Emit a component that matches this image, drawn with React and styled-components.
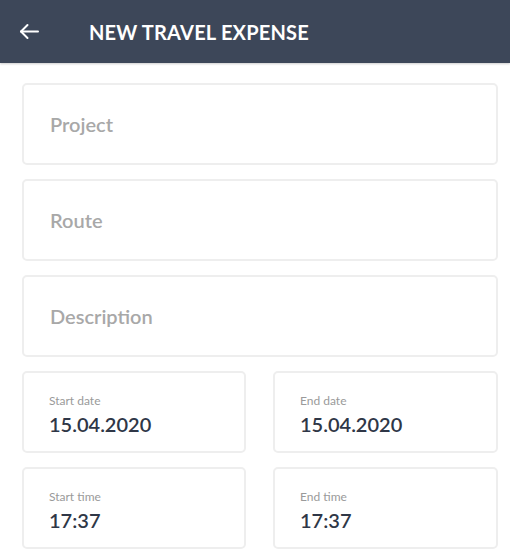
import React from 'react';
import styled, { createGlobalStyle } from 'styled-components';

const GlobalStyle = createGlobalStyle`
  body {
    margin: 0;
    background: #ffffff;
    font-family: Lato, "Open Sans", sans-serif;
  }
`;

const Page = styled.div`
  width: 510px;
  min-height: 556px;
  background: #ffffff;
`;

const Header = styled.header`
  height: 63px;
  display: flex;
  align-items: center;
  padding-left: 19px;
  gap: 49px;
  background: #3d4759;
  box-shadow: 0 1px 2px rgba(0, 0, 0, 0.2);
`;

const BackButton = styled.button`
  display: flex;
  align-items: center;
  padding: 0;
  border: none;
  background: none;
  cursor: pointer;
`;

const Title = styled.h1`
  margin: 0;
  font-size: 20px;
  font-weight: 700;
  color: #ffffff;
  letter-spacing: 0.2px;
`;

const Form = styled.div`
  display: flex;
  flex-direction: column;
  gap: 14px;
  padding: 20px 12px 0 22px;
`;

const Card = styled.div`
  box-sizing: border-box;
  height: 82px;
  border: 2px solid #eeeeee;
  border-radius: 5px;
  background: #ffffff;
  display: flex;
  flex-direction: column;
  justify-content: center;
  padding-left: ${p => (p.$compact ? '25px' : '26px')};
  padding-top: ${p => (p.$compact ? '5px' : '0')};
`;

const Placeholder = styled.span`
  font-size: 20px;
  font-weight: 600;
  color: #a8a8a8;
`;

const Row = styled.div`
  display: grid;
  grid-template-columns: 224px 225px;
  column-gap: 27px;
`;

const Label = styled.span`
  font-size: 12px;
  color: #9a9a9a;
  line-height: 15px;
`;

const Value = styled.span`
  margin-top: 3px;
  font-size: 20px;
  font-weight: 600;
  color: #2f3747;
  line-height: 26px;
`;

const ArrowLeft = () => (
  <svg width="21" height="17" viewBox="0 0 21 17" fill="none" stroke="#ffffff" strokeWidth="2" strokeLinecap="round" strokeLinejoin="round">
    <path d="M19 8.5H2" />
    <path d="M8.5 2L2 8.5l6.5 6.5" />
  </svg>
);

const fields = ['Project', 'Route', 'Description'];

const pairs = [
  [
    { label: 'Start date', value: '15.04.2020' },
    { label: 'End date', value: '15.04.2020' },
  ],
  [
    { label: 'Start time', value: '17:37' },
    { label: 'End time', value: '17:37' },
  ],
];

export default function App() {
  return (
    <Page>
      <GlobalStyle />
      <Header>
        <BackButton aria-label="Back">
          <ArrowLeft />
        </BackButton>
        <Title>NEW TRAVEL EXPENSE</Title>
      </Header>
      <Form>
        {fields.map(f => (
          <Card key={f}>
            <Placeholder>{f}</Placeholder>
          </Card>
        ))}
        {pairs.map((row, i) => (
          <Row key={i}>
            {row.map(c => (
              <Card key={c.label} $compact>
                <Label>{c.label}</Label>
                <Value>{c.value}</Value>
              </Card>
            ))}
          </Row>
        ))}
      </Form>
    </Page>
  );
}
